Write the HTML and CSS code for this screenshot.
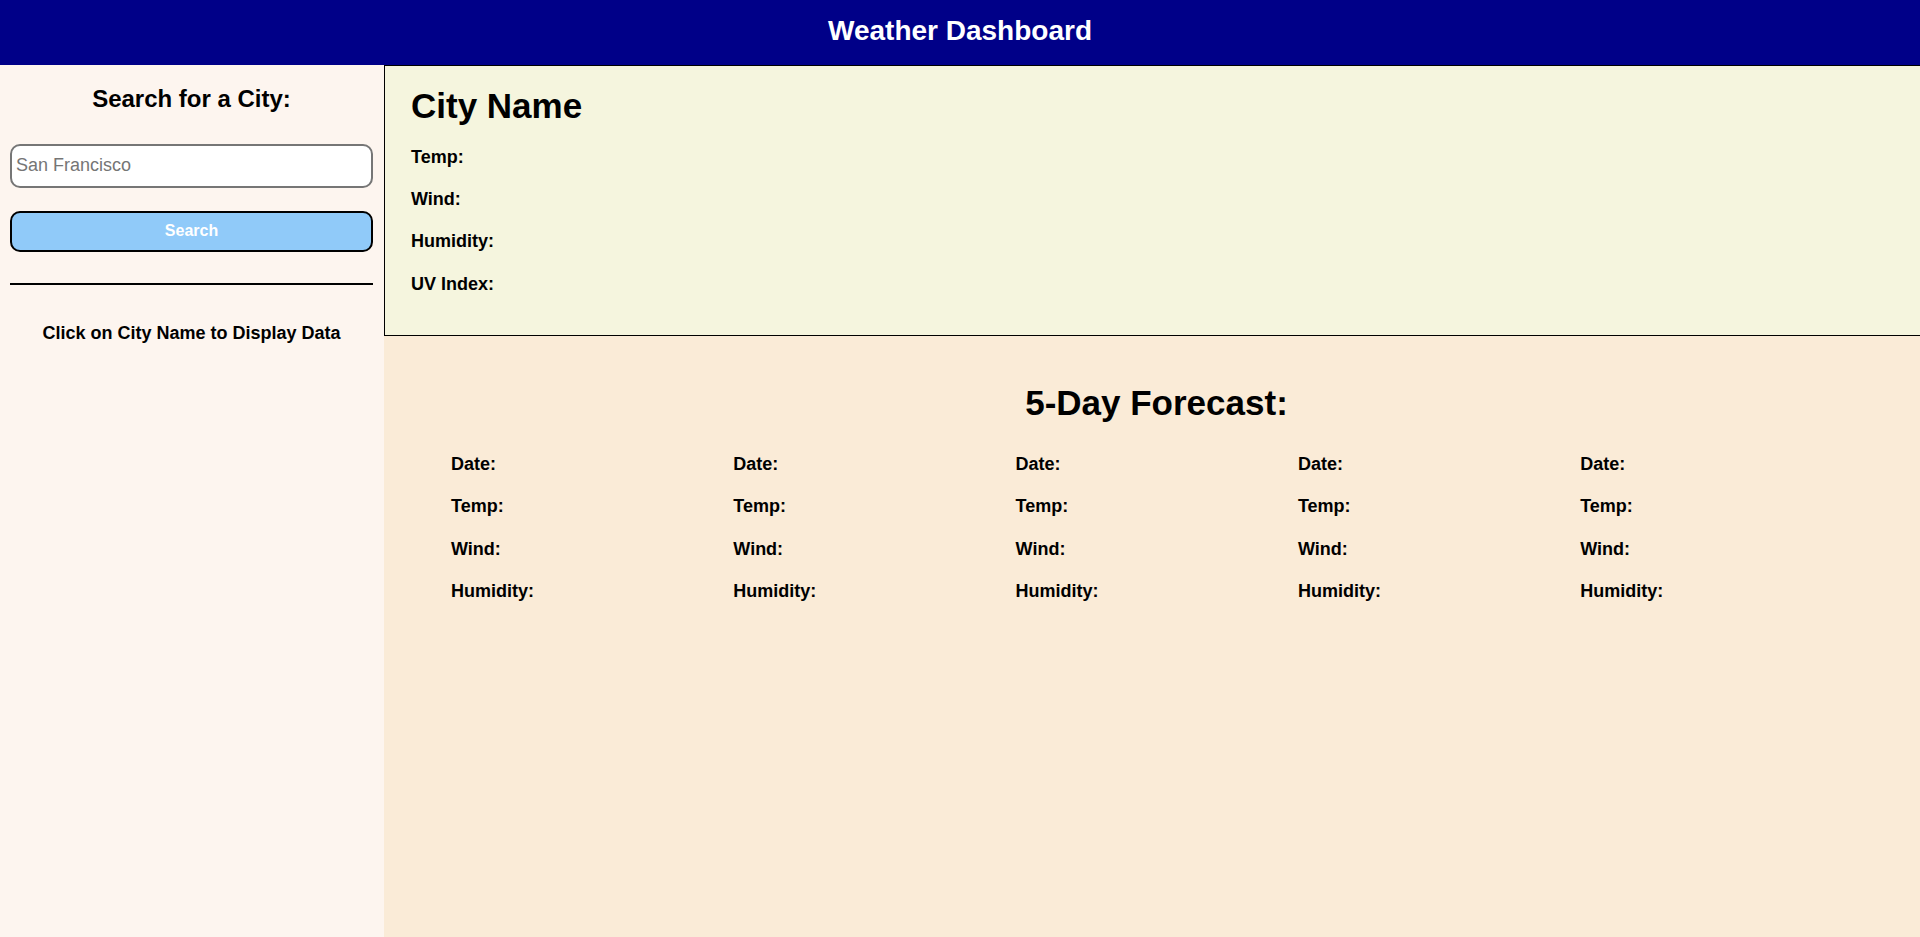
FILE: index.html
```html
<!DOCTYPE html>
<html lang="en">
<head>
<meta charset="utf-8">
<title>Weather Dashboard</title>
<link rel="stylesheet" href="styles.css">
</head>
<body>
<header class="topbar">
  <h1 class="topbar-title">Weather Dashboard</h1>
</header>
<div class="layout">
  <aside class="sidebar">
    <h2 class="search-title">Search for a City:</h2>
    <input class="search-input" type="text" placeholder="San Francisco">
    <button class="search-btn" type="button">Search</button>
    <hr class="divider">
    <p class="hint">Click on City Name to Display Data</p>
  </aside>
  <main class="main">
    <section class="current">
      <h2 class="city-name">City Name</h2>
      <div class="stats">
        <p class="stat">Temp:</p>
        <p class="stat">Wind:</p>
        <p class="stat">Humidity:</p>
        <p class="stat">UV Index:</p>
      </div>
    </section>
    <section class="forecast">
      <h2 class="forecast-title">5-Day Forecast:</h2>
      <div class="days">
        <div class="day"><p class="stat">Date:</p><p class="stat">Temp:</p><p class="stat">Wind:</p><p class="stat">Humidity:</p></div>
        <div class="day"><p class="stat">Date:</p><p class="stat">Temp:</p><p class="stat">Wind:</p><p class="stat">Humidity:</p></div>
        <div class="day"><p class="stat">Date:</p><p class="stat">Temp:</p><p class="stat">Wind:</p><p class="stat">Humidity:</p></div>
        <div class="day"><p class="stat">Date:</p><p class="stat">Temp:</p><p class="stat">Wind:</p><p class="stat">Humidity:</p></div>
        <div class="day"><p class="stat">Date:</p><p class="stat">Temp:</p><p class="stat">Wind:</p><p class="stat">Humidity:</p></div>
      </div>
    </section>
  </main>
</div>
</body>
</html>
```
FILE: styles.css
```css
* { box-sizing: border-box; }
html, body { margin: 0; padding: 0; height: 100%; }
body {
  font-family: "Liberation Sans", Arial, sans-serif;
  color: #000;
  display: flex;
  flex-direction: column;
  overflow: hidden;
}
.topbar {
  height: 65px;
  background: #000088;
  display: flex;
  justify-content: center;
  flex: none;
}
.topbar-title {
  margin: 0;
  padding-top: 15px;
  font-size: 28px;
  line-height: 32px;
  font-weight: bold;
  color: #fff;
}
.layout {
  flex: 1;
  display: grid;
  grid-template-columns: 384px 1fr;
  min-height: 0;
}
.sidebar {
  background: #fdf5ef;
  padding: 19.7px 11px 0 10px;
  display: flex;
  flex-direction: column;
}
.search-title {
  margin: 0;
  font-size: 24px;
  line-height: 28px;
  font-weight: bold;
  text-align: center;
}
.search-input {
  margin-top: 31.3px;
  height: 44px;
  width: 100%;
  border: 2px solid #767676;
  border-radius: 10px;
  padding: 0 4px;
  font-family: "Liberation Sans", Arial, sans-serif;
  font-size: 18px;
  background: #fff;
  outline: none;
}
.search-input::placeholder { color: #757575; }
.search-btn {
  margin-top: 23px;
  height: 41px;
  width: 100%;
  background: #90caf9;
  border: 2px solid #000;
  border-radius: 10px;
  color: #fff;
  font-family: "Liberation Sans", Arial, sans-serif;
  font-size: 16px;
  font-weight: bold;
}
.divider {
  margin: 31px 0 0;
  border: 0;
  height: 2px;
  background: #000;
}
.hint {
  margin: 36.8px 0 0;
  font-size: 18px;
  line-height: 22px;
  font-weight: bold;
  text-align: center;
}
.main {
  background: #faebd7;
  display: flex;
  flex-direction: column;
  min-width: 0;
}
.current {
  background: #f5f5de;
  border: 1px solid #000;
  border-right: 0;
  height: 271px;
  padding: 20px 0 0 26px;
}
.city-name {
  margin: 0;
  font-size: 35px;
  line-height: 40px;
  font-weight: bold;
}
.stats {
  margin-top: 19.8px;
  display: flex;
  flex-direction: column;
  gap: 20.33px;
}
.stat {
  margin: 0;
  font-size: 18px;
  line-height: 22px;
  font-weight: bold;
}
.forecast {
  padding: 47px 58px 0 67px;
}
.forecast-title {
  margin: 0;
  font-size: 35px;
  line-height: 40px;
  font-weight: bold;
  text-align: center;
}
.days {
  margin-top: 29.8px;
  display: grid;
  grid-template-columns: repeat(5, 282.3px);
}
.day {
  display: flex;
  flex-direction: column;
  gap: 20.5px;
}
```
